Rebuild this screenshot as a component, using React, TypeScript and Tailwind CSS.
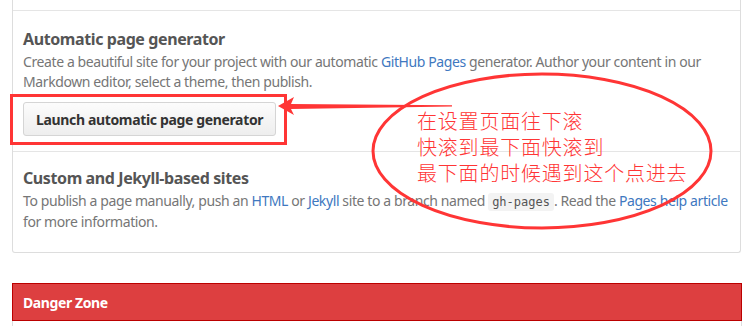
import React from 'react';

const body = { fontFamily: '"Segoe UI", "Noto Sans", "Open Sans", Arial, sans-serif' };
const cjk = { fontFamily: '"Noto Sans CJK SC", "Noto Sans", sans-serif' };

const Link: React.FC<{ children: React.ReactNode }> = ({ children }) => (
  <a href="#" className="text-[#4078c0]">
    {children}
  </a>
);

const Annotation: React.FC = () => (
  <>
    <div className="absolute left-[10px] top-[94px] w-[277px] h-[51px] border-[3px] border-[#ff3535]" />
    <svg className="absolute left-0 top-0" width="745" height="326" viewBox="0 0 745 326">
      <polygon points="278,106 294,97 291,104 452,105.3 452,106.6 291,109 294,115" fill="#ff3535" />
      <ellipse cx="542" cy="151" rx="169" ry="77" fill="none" stroke="#ff3535" strokeWidth="3" />
    </svg>
    <div
      className="absolute left-[417px] top-[108px] text-[20px] leading-[26px] tracking-[0.8px] text-[#ff3535] font-light"
      style={cjk}
    >
      <div>在设置页面往下滚</div>
      <div>快滚到最下面快滚到</div>
      <div>最下面的时候遇到这个点进去</div>
    </div>
  </>
);

export default function App() {
  return (
    <div className="relative w-[745px] h-[326px] overflow-hidden bg-white tracking-[-0.4px]" style={body}>
      <div className="ml-3 w-[729px] border-x border-b border-[#ddd] rounded-b-[3px]">
        <div className="h-[11px] border-b border-[#e5e5e5]" />

        <section className="px-[10px] pt-[18px] pb-[15px] border-b border-[#e5e5e5]">
          <h3 className="text-[16px] leading-[20px] font-bold text-[#555] mb-[3px]">Automatic page generator</h3>
          <p className="text-[14px] leading-[20px] text-[#767676]">
            Create a beautiful site for your project with our automatic <Link>GitHub Pages</Link> generator. Author your content in our Markdown editor, select a theme, then publish.
          </p>
          <button className="mt-[10px] h-[34px] px-[12px] rounded-[3px] border border-[#d5d5d5] bg-gradient-to-b from-[#fcfcfc] to-[#eee] text-[14px] font-bold text-[#333] tracking-[-0.35px]">
            Launch automatic page generator
          </button>
        </section>

        <section className="px-[10px] pt-[16px] pb-[20px]">
          <h3 className="text-[16px] leading-[20px] font-bold text-[#555] mb-[3px]">Custom and Jekyll-based sites</h3>
          <p className="text-[14px] leading-[20px] text-[#767676]">
            To publish a page manually, push an <Link>HTML</Link> or <Link>Jekyll</Link> site to a branch named{' '}
            <code
              className="px-[4px] py-[2px] rounded-[3px] bg-[#f3f3f3] text-[12px] text-[#555] tracking-normal"
              style={{ fontFamily: '"DejaVu Sans Mono", "Liberation Mono", monospace' }}
            >
              gh-pages
            </code>
            . Read the <Link>Pages help article</Link> for more information.
          </p>
        </section>
      </div>

      <div className="ml-3 mt-[30px] w-[730px] border-x border-[#ddd]">
        <div className="h-[38px] px-[10px] flex items-center bg-[#dd3f40] border border-[#b00] -mx-px text-[14px] font-bold text-white">
          Danger Zone
        </div>
        <div className="h-[10px]" />
      </div>

      <Annotation />
    </div>
  );
}
